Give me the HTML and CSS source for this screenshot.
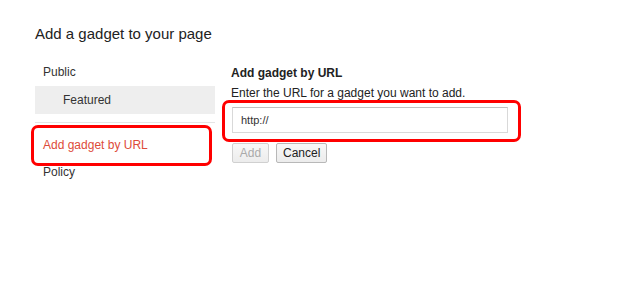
FILE: index.html
```html
<!DOCTYPE html>
<html lang="en">
<head>
    <meta charset="UTF-8">
    <title>Add a gadget to your page</title>
    <link rel="stylesheet" href="styles.css">
</head>
<body>

<div class="dialog">
    <h1>Add a gadget to your page</h1>

    <div class="columns">
        <!-- Left navigation -->
        <ul class="nav">
            <li class="nav-item">Public</li>
            <li class="nav-item sub selected">Featured</li>
            <li class="divider"></li>
            <li class="nav-item active">Add gadget by URL</li>
            <li class="nav-item">Policy</li>
            <li class="mark mark-nav"></li>
        </ul>

        <!-- Add by URL form -->
        <div class="panel">
            <h2>Add gadget by URL</h2>
            <p class="hint">Enter the URL for a gadget you want to add.</p>
            <div class="url-row">
                <input type="text" class="url-input" value="http://">
                <span class="mark mark-input"></span>
            </div>
            <div class="buttons">
                <button type="button" class="btn" disabled>Add</button>
                <button type="button" class="btn">Cancel</button>
            </div>
        </div>
    </div>
</div>

</body>
</html>
```

FILE: styles.css
```css
body {
    margin: 0;
    font-family: "Liberation Sans", Arial, sans-serif;
    background-color: #fff;
    color: #222;
}

.dialog {
    padding: 24px 0 0 35px;
}

h1 {
    font-size: 15px;
    font-weight: normal;
    line-height: 20px;
    margin: 0 0 15px 0;
    color: #222;
}

.columns {
    display: flex;
    gap: 16px;
}

/* left nav */
.nav {
    list-style: none;
    margin: 0;
    padding: 0;
    width: 180px;
    position: relative;
    font-size: 12px;
}

.nav-item {
    height: 27px;
    line-height: 27px;
    padding-left: 8px;
    color: #333;
}

.nav-item.sub {
    padding-left: 28px;
    height: 28px;
    line-height: 28px;
}

.nav-item.selected {
    background-color: #eeeeee;
}

.nav-item.active {
    color: #dd4b39;
}

.divider {
    border-top: 1px solid #e5e5e5;
    margin: 8px 0 9px 0;
}

/* right panel */
.panel {
    font-size: 12px;
}

h2 {
    font-size: 12px;
    font-weight: bold;
    line-height: 16px;
    margin: 6px 0 4px 0;
    color: #222;
}

.hint {
    margin: 0;
    line-height: 16px;
    color: #222;
}

.url-row {
    position: relative;
    margin-top: 6px;
    padding-left: 1px;
}

.url-input {
    box-sizing: border-box;
    width: 276px;
    height: 26px;
    margin: 0;
    padding: 0 8px;
    border: 1px solid #d9d9d9;
    border-top-color: #c0c0c0;
    font-family: "Liberation Sans", Arial, sans-serif;
    font-size: 11px;
    color: #333;
}

.buttons {
    display: flex;
    gap: 7px;
    margin-top: 10px;
    padding-left: 1px;
}

.btn {
    min-width: 37px;
    height: 20px;
    padding: 0 6px;
    font-family: "Liberation Sans", Arial, sans-serif;
    font-size: 12px;
    color: #222;
    background: linear-gradient(#f8f8f8, #ececec);
    border: 1px solid #b8b8b8;
    border-radius: 2px;
}

.btn:disabled {
    color: #aaa;
    border-color: #d0d0d0;
}

/* red annotation outlines */
.mark {
    position: absolute;
    border: 3px solid #f00;
    border-radius: 7px;
    box-sizing: border-box;
    list-style: none;
}

.mark-nav {
    left: -4px;
    top: 66px;
    width: 181px;
    height: 41px;
}

.mark-input {
    left: -9px;
    top: -7px;
    width: 299px;
    height: 42px;
}
```
